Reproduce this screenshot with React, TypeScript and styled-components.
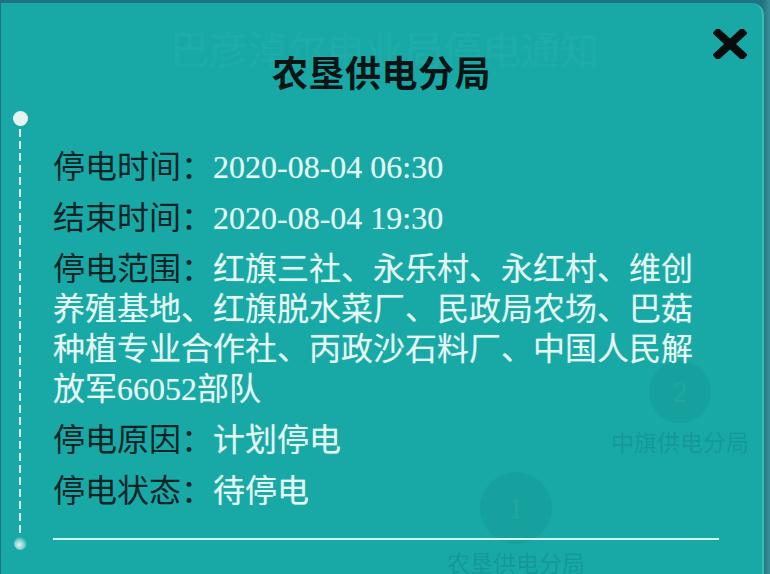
import React from 'react'
import styled, { createGlobalStyle } from 'styled-components'

const GlobalStyle = createGlobalStyle`
  html, body {
    margin: 0;
    padding: 0;
    background: #1f7380;
  }
  body {
    font-family: "Noto Sans CJK SC", "Noto Sans", sans-serif;
  }
`

const rows = [
  { label: '停电时间：', value: '2020-08-04 06:30' },
  { label: '结束时间：', value: '2020-08-04 19:30' },
  {
    label: '停电范围：',
    value:
      '红旗三社、永乐村、永红村、维创养殖基地、红旗脱水菜厂、民政局农场、巴菇种植专业合作社、丙政沙石料厂、中国人民解放军66052部队',
  },
  { label: '停电原因：', value: '计划停电' },
  { label: '停电状态：', value: '待停电' },
]

// steps of the page behind the dialog, seen through it
const steps = [
  { num: 2, name: '中旗供电分局', x: 609, y: 358, size: 62 },
  { num: 1, name: '农垦供电分局', x: 445, y: 469, size: 72 },
]

export default function App() {
  return (
    <>
      <GlobalStyle />
      <StyledPage>
        <StyledPanel>
          <StyledBackdrop>
            <StyledGhostTitle>巴彦淖尔电业局停电通知</StyledGhostTitle>
            {steps.map((s) => (
              <StyledStep key={s.num} $x={s.x} $y={s.y}>
                <StyledStepCircle $size={s.size}>{s.num}</StyledStepCircle>
                <StyledStepName>{s.name}</StyledStepName>
              </StyledStep>
            ))}
          </StyledBackdrop>
          <StyledHeader>
            <StyledTitle>农垦供电分局</StyledTitle>
            <StyledClose aria-label="关闭">
              <svg width="34" height="30" viewBox="0 0 34 30">
                <path d="M5 4 L29 26 M29 4 L5 26" stroke="#070c0c" strokeWidth="8" strokeLinecap="square" />
              </svg>
            </StyledClose>
          </StyledHeader>
          <StyledBody>
            <StyledTimeline>
              <StyledDot />
              <StyledDashes />
              <StyledGlow />
            </StyledTimeline>
            <StyledContent>
              {rows.map((r) => (
                <StyledRow key={r.label}>
                  <StyledLabel>{r.label}</StyledLabel>
                  <StyledValue>{r.value}</StyledValue>
                </StyledRow>
              ))}
              <StyledDivider />
            </StyledContent>
          </StyledBody>
        </StyledPanel>
      </StyledPage>
    </>
  )
}

const StyledPage = styled.div`
  width: 770px;
  height: 574px;
  box-sizing: border-box;
  padding: 3px 6px 0 1px;
  display: flex;
  overflow: hidden;
  background: linear-gradient(90deg, #1f7380 0%, #1f7380 99%, #3b8f9a 100%);
`

const StyledPanel = styled.div`
  position: relative;
  flex: 1;
  height: 571px;
  background: #18a9a6;
  border-top-right-radius: 12px;
  border-right: 2px solid #37bcb7;
  overflow: hidden;
`

const StyledBackdrop = styled.div`
  position: absolute;
  inset: 0;
  z-index: 0;
  pointer-events: none;
`

const StyledGhostTitle = styled.div`
  margin: 25px 0 0 169px;
  font-size: 39px;
  line-height: 1;
  color: rgba(255, 255, 255, 0.05);
  white-space: nowrap;
`

const StyledStep = styled.div<{ $x: number; $y: number }>`
  position: absolute;
  left: ${(p) => p.$x}px;
  top: ${(p) => p.$y}px;
  width: 140px;
  display: flex;
  flex-direction: column;
  align-items: center;
  gap: 6px;
`

const StyledStepCircle = styled.div<{ $size: number }>`
  width: ${(p) => p.$size}px;
  height: ${(p) => p.$size}px;
  border-radius: 50%;
  background: rgba(0, 70, 70, 0.08);
  display: flex;
  align-items: center;
  justify-content: center;
  font-family: "Liberation Serif", serif;
  font-size: 30px;
  color: rgba(255, 255, 255, 0.07);
`

const StyledStepName = styled.div`
  font-size: 23px;
  line-height: 24px;
  color: rgba(0, 60, 60, 0.16);
  white-space: nowrap;
`

const StyledHeader = styled.div`
  position: relative;
  z-index: 1;
  display: grid;
  grid-template-columns: 1fr auto 1fr;
  align-items: start;
`

const StyledTitle = styled.h1`
  grid-column: 2;
  margin: 46px 0 0;
  font-size: 36px;
  line-height: 44px;
  font-weight: 700;
  color: #0a1414;
  letter-spacing: 0.5px;
`

const StyledClose = styled.button`
  grid-column: 3;
  justify-self: end;
  margin: 26px 15px 0 0;
  padding: 0;
  border: 0;
  background: none;
  display: flex;
  cursor: pointer;
`

const StyledBody = styled.div`
  position: relative;
  z-index: 1;
  display: flex;
`

const StyledTimeline = styled.div`
  width: 38px;
  display: flex;
  flex-direction: column;
  align-items: center;
  padding-top: 18px;
`

const StyledDot = styled.div`
  width: 15px;
  height: 15px;
  border-radius: 50%;
  background: #e6f3f1;
`

const StyledDashes = styled.div`
  width: 2px;
  height: 404px;
  margin-top: 3px;
  background: repeating-linear-gradient(
    180deg,
    #dff4f1 0px,
    #dff4f1 8px,
    transparent 8px,
    transparent 12px
  );
`

const StyledGlow = styled.div`
  width: 13px;
  height: 13px;
  margin-top: 4px;
  border-radius: 50%;
  background: radial-gradient(circle at 40% 60%, #e8f7f4 0%, rgba(220, 245, 240, 0.5) 45%, rgba(24, 169, 166, 0) 75%);
`

const StyledContent = styled.div`
  margin-left: 14px;
  padding-top: 51px;
  width: 666px;
`

const StyledRow = styled.p`
  width: 645px;
  margin: 0 0 11px;
  font-size: 32px;
  line-height: 40px;
`

const StyledLabel = styled.span`
  color: #0d2426;
`

const StyledValue = styled.span`
  font-family: "Liberation Serif", "Noto Sans CJK SC", serif;
  line-height: 1;
  color: #e4f9f4;
  text-shadow: 0 0 1px rgba(255, 255, 255, 0.35);
`

const StyledDivider = styled.div`
  margin-top: 30px;
  height: 2px;
  width: 666px;
  background: #d3f6f1;
`
